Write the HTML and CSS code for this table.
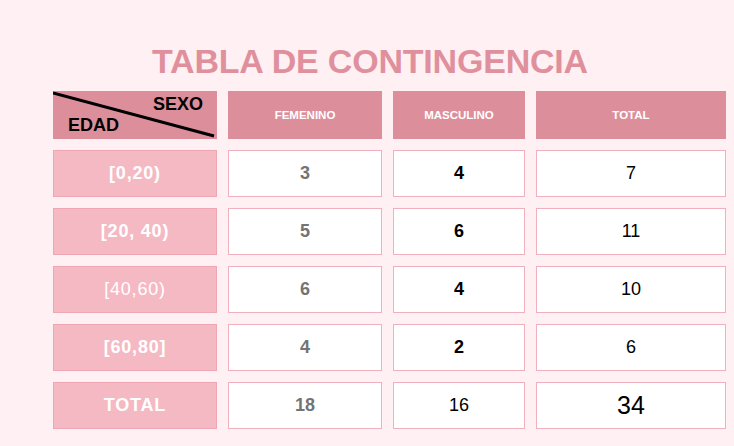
FILE: index.html
```html
<!DOCTYPE html>
<html lang="es">
<head>
<meta charset="utf-8">
<title>Tabla de contingencia</title>
<link rel="stylesheet" href="styles.css">
</head>
<body>
<main class="page">
  <h1 class="title">TABLA DE CONTINGENCIA</h1>
  <div class="table">
    <div class="corner">
      <svg class="diag" width="164" height="48" viewBox="0 0 164 48"><line x1="0" y1="2" x2="161" y2="45" stroke="#000" stroke-width="3"/></svg>
      <span class="corner-top">SEXO</span>
      <span class="corner-bottom">EDAD</span>
    </div>
    <div class="head">FEMENINO</div>
    <div class="head">MASCULINO</div>
    <div class="head">TOTAL</div>

    <div class="label">[0,20)</div>
    <div class="cell gray">3</div>
    <div class="cell bold">4</div>
    <div class="cell">7</div>

    <div class="label">[20, 40)</div>
    <div class="cell gray">5</div>
    <div class="cell bold">6</div>
    <div class="cell">11</div>

    <div class="label light">[40,60)</div>
    <div class="cell gray">6</div>
    <div class="cell bold">4</div>
    <div class="cell">10</div>

    <div class="label">[60,80]</div>
    <div class="cell gray">4</div>
    <div class="cell bold">2</div>
    <div class="cell">6</div>

    <div class="label">TOTAL</div>
    <div class="cell gray">18</div>
    <div class="cell">16</div>
    <div class="cell big">34</div>
  </div>
</main>
</body>
</html>
```

FILE: styles.css
```css
* { box-sizing: border-box; }
html, body {
  margin: 0;
  background: #fff0f3;
  font-family: "Liberation Sans", Arial, sans-serif;
}
.page {
  width: 734px;
  height: 446px;
  padding-top: 41px;
}
.title {
  margin: 0 0 10px 0;
  padding-left: 6px;
  text-align: center;
  font-size: 34px;
  line-height: 40px;
  letter-spacing: -0.2px;
  font-weight: 700;
  color: #e0909d;
}
.table {
  display: grid;
  grid-template-columns: 164px 154px 132px 190px;
  grid-template-rows: 48px repeat(5, 47px);
  gap: 11px;
  margin-left: 53px;
}
.corner {
  position: relative;
  background: #dd8e9b;
  display: flex;
  flex-direction: column;
  justify-content: space-between;
  padding: 4px 14px 5px 15px;
  font-size: 18px;
  line-height: 18px;
  font-weight: 700;
  color: #000;
}
.diag {
  position: absolute;
  left: 0;
  top: 0;
}
.corner-top { align-self: flex-end; position: relative; }
.corner-bottom { align-self: flex-start; position: relative; }
.head {
  background: #dd8e9b;
  color: #fff;
  font-size: 11.5px;
  font-weight: 700;
  display: flex;
  align-items: center;
  justify-content: center;
}
.label {
  background: #f5b9c4;
  border: 1px solid #eda6b2;
  color: #fff;
  font-size: 18px;
  font-weight: 700;
  letter-spacing: 0.8px;
  display: flex;
  align-items: center;
  justify-content: center;
}
.label.light { font-weight: 400; }
.cell {
  background: #fff;
  border: 1px solid #f0b0bd;
  color: #000;
  font-size: 18px;
  display: flex;
  align-items: center;
  justify-content: center;
}
.cell.gray { color: #747474; font-weight: 700; }
.cell.bold { font-weight: 700; }
.cell.big { font-size: 25px; }
```
